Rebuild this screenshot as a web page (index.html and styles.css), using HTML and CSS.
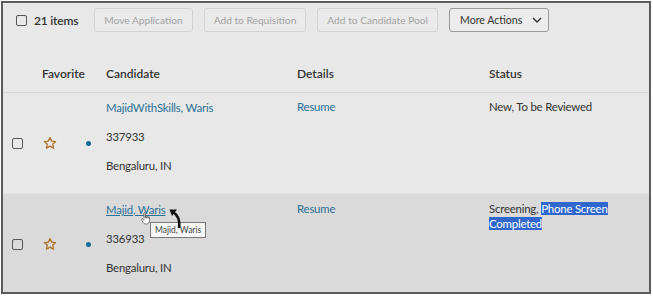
FILE: index.html
```html
<!DOCTYPE html>
<html lang="en">
<head>
    <meta charset="UTF-8">
    <title>Candidates</title>
    <link rel="stylesheet" href="styles.css">
</head>
<body>
    <div class="frame">
        <div class="toolbar">
            <span class="check"></span>
            <span class="count">21 items</span>
            <button class="btn" disabled>Move Application</button>
            <button class="btn" disabled>Add to Requisition</button>
            <button class="btn" disabled>Add to Candidate Pool</button>
            <button class="btn more">More Actions
                <svg width="10" height="6" viewBox="0 0 10 6"><path d="M1 1l4 4 4-4" fill="none" stroke="#333" stroke-width="1.4"/></svg>
            </button>
        </div>

        <div class="grid head">
            <div></div>
            <div>Favorite</div>
            <div></div>
            <div>Candidate</div>
            <div>Details</div>
            <div>Status</div>
        </div>

        <div class="grid row">
            <div class="mid"><span class="check"></span></div>
            <div class="mid"><svg class="star" width="14" height="14" viewBox="0 0 24 24"><path d="M12 2.5l2.9 6.3 6.8.7-5.1 4.6 1.5 6.8L12 17.4l-6.1 3.5 1.5-6.8-5.1-4.6 6.8-.7z" fill="none" stroke="#b07225" stroke-width="2.2" stroke-linejoin="round"/></svg></div>
            <div class="mid"><span class="dot"></span></div>
            <div class="cand">
                <a href="#">MajidWithSkills, Waris</a>
                <div>337933</div>
                <div>Bengaluru, IN</div>
            </div>
            <div class="cell"><a href="#">Resume</a></div>
            <div class="cell">New, To be Reviewed</div>
        </div>

        <div class="grid row hover">
            <div class="mid"><span class="check"></span></div>
            <div class="mid"><svg class="star" width="14" height="14" viewBox="0 0 24 24"><path d="M12 2.5l2.9 6.3 6.8.7-5.1 4.6 1.5 6.8L12 17.4l-6.1 3.5 1.5-6.8-5.1-4.6 6.8-.7z" fill="none" stroke="#b07225" stroke-width="2.2" stroke-linejoin="round"/></svg></div>
            <div class="mid"><span class="dot"></span></div>
            <div class="cand">
                <span class="tip-anchor">
                    <a href="#" class="under">Majid, Waris</a>
                    <span class="tooltip">Majid, Waris</span>
                    <svg class="pointer" width="14" height="16" viewBox="0 0 14 16"><path d="M4 7V2.2c0-.8 1.4-.8 1.4 0V7M5.4 6.5V5.4c0-.8 1.4-.8 1.4 0v1.4M6.8 6.8V6c0-.8 1.4-.8 1.4 0v1.2M8.2 7.2v-.6c0-.8 1.3-.8 1.3 0v3c0 2-1 3.4-3 3.4H5.6c-1.4 0-2.2-1-2.8-2.2L1.6 8.6c-.4-.8.6-1.4 1.2-.7L4 9.4" fill="#fff" stroke="#555" stroke-width=".8"/></svg>
                    <svg class="arrow" width="16" height="22" viewBox="0 0 16 22"><path d="M10 21C11 14 9 8 4 5" fill="none" stroke="#111" stroke-width="2.6"/><path d="M0.5 2.5L8 2.5 3 9z" fill="#111"/></svg>
                </span>
                <div>336933</div>
                <div>Bengaluru, IN</div>
            </div>
            <div class="cell"><a href="#">Resume</a></div>
            <div class="cell status">Screening, <mark>Phone Screen Completed</mark></div>
        </div>
    </div>
</body>
</html>
```

FILE: styles.css
```css
body {
    margin: 0;
    font-family: Lato, "Open Sans", sans-serif;
    font-size: 11.4px;
    letter-spacing: -0.2px;
    color: #333;
    background: #fff;
}
.frame {
    box-sizing: border-box;
    width: 650px;
    height: 293px;
    margin: 1px 0 0 1px;
    border: 2px solid #5b5b5b;
    background: #e8e8e8;
    overflow: hidden;
}
.toolbar {
    display: flex;
    align-items: center;
    height: 34px;
    padding-left: 13px;
}
.check {
    display: inline-block;
    box-sizing: border-box;
    width: 11px;
    height: 11px;
    border: 1.3px solid #555;
    border-radius: 2px;
}
.count {
    margin-left: 7px;
    margin-right: 16px;
    font-weight: 600;
    font-size: 12px;
    color: #333;
}
.btn {
    height: 24px;
    margin-right: 11px;
    padding: 0 9px;
    font-family: inherit;
    font-size: 10.2px;
    letter-spacing: 0;
    color: #a3a3a3;
    background: #eaeaea;
    border: 1px solid #d2d2d2;
    border-radius: 3px;
}
.btn.more {
    display: flex;
    align-items: center;
    gap: 10px;
    padding: 0 6px 0 10px;
    font-size: 10.6px;
    color: #333;
    border-color: #9a9a9a;
    background: #ececec;
}
.grid {
    display: grid;
    grid-template-columns: 39px 43px 21px 191px 192px 1fr;
}
.head {
    padding: 28px 0 9px;
    line-height: 18px;
    font-size: 12px;
    letter-spacing: 0;
    font-weight: 600;
    border-bottom: 1px solid #d7d7d7;
}
.row {
    height: 100px;
    box-sizing: border-box;
}
.row.hover {
    background: #dadada;
    border-top: 1px solid #e2e2e2;
    height: 100px;
    padding-top: 1px;
}
.mid {
    display: flex;
    align-items: center;
}
.mid .check {
    margin-left: 9px;
}
.star {
    margin-left: 1px;
}
.dot {
    display: inline-block;
    width: 5px;
    height: 5px;
    margin-left: 1px;
    border-radius: 50%;
    background: #0f6b98;
}
.cand {
    line-height: 29px;
}
.cell {
    padding-top: 7px;
    line-height: 14.5px;
}
a {
    color: #2b7197;
    text-decoration: none;
}
a.under {
    text-decoration: underline;
}
.status {
    padding-right: 18px;
}
mark {
    background: #2f67cf;
    color: #fff;
}
.tip-anchor {
    position: relative;
    display: inline-block;
}
.tooltip {
    position: absolute;
    left: 44px;
    top: 27px;
    padding: 0 4px;
    line-height: 14px;
    font-size: 8.5px;
    letter-spacing: 0;
    color: #444;
    background: #f7f7f7;
    border: 1px solid #777;
    white-space: nowrap;
}
.pointer {
    position: absolute;
    left: 34px;
    top: 16px;
}
.arrow {
    position: absolute;
    left: 63px;
    top: 12px;
}
```
